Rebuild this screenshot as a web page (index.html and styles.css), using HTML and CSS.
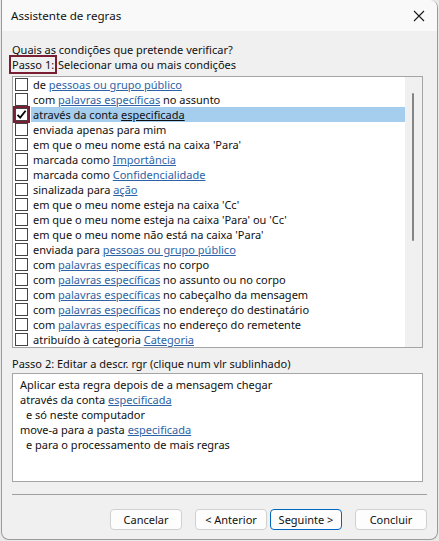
FILE: index.html
```html
<!DOCTYPE html>
<html lang="pt">
<head>
  <meta charset="UTF-8">
  <title>Assistente de regras</title>
  <link rel="stylesheet" href="styles.css">
</head>
<body>
  <div class="window">
    <!-- barra de título -->
    <div class="titlebar">
      <span class="title">Assistente de regras</span>
      <svg class="close" width="12" height="12" viewBox="0 0 12 12">
        <path d="M1 1 L11 11 M11 1 L1 11" stroke="#1a1a1a" stroke-width="1.1" fill="none"/>
      </svg>
    </div>

    <div class="content">
      <p class="line">Quais as condições que pretende verificar?</p>
      <p class="line"><span class="focus">Passo 1:</span> Selecionar uma ou mais condições</p>

      <!-- lista de condições -->
      <div class="listbox">
        <ul class="conds">
          <li><span class="box"></span><span class="label">de <a href="#">pessoas ou grupo público</a></span></li>
          <li><span class="box"></span><span class="label">com <a href="#">palavras específicas</a> no assunto</span></li>
          <li class="selected"><span class="box checked"><svg width="11" height="11" viewBox="0 0 11 11"><path d="M1.5 5.8 L4.2 8.6 L9.6 1.8" stroke="#000" stroke-width="1.8" fill="none"/></svg></span><span class="label">através da conta <a href="#">especificada</a></span></li>
          <li><span class="box"></span><span class="label">enviada apenas para mim</span></li>
          <li><span class="box"></span><span class="label">em que o meu nome está na caixa 'Para'</span></li>
          <li><span class="box"></span><span class="label">marcada como <a href="#">Importância</a></span></li>
          <li><span class="box"></span><span class="label">marcada como <a href="#">Confidencialidade</a></span></li>
          <li><span class="box"></span><span class="label">sinalizada para <a href="#">ação</a></span></li>
          <li><span class="box"></span><span class="label">em que o meu nome esteja na caixa 'Cc'</span></li>
          <li><span class="box"></span><span class="label">em que o meu nome esteja na caixa 'Para' ou 'Cc'</span></li>
          <li><span class="box"></span><span class="label">em que o meu nome não está na caixa 'Para'</span></li>
          <li><span class="box"></span><span class="label">enviada para <a href="#">pessoas ou grupo público</a></span></li>
          <li><span class="box"></span><span class="label">com <a href="#">palavras específicas</a> no corpo</span></li>
          <li><span class="box"></span><span class="label">com <a href="#">palavras específicas</a> no assunto ou no corpo</span></li>
          <li><span class="box"></span><span class="label">com <a href="#">palavras específicas</a> no cabeçalho da mensagem</span></li>
          <li><span class="box"></span><span class="label">com <a href="#">palavras específicas</a> no endereço do destinatário</span></li>
          <li><span class="box"></span><span class="label">com <a href="#">palavras específicas</a> no endereço do remetente</span></li>
          <li><span class="box"></span><span class="label">atribuído à categoria <a href="#">Categoria</a></span></li>
        </ul>
        <div class="scrollbar"><div class="thumb"></div></div>
      </div>

      <p class="line step2">Passo 2: Editar a descr. rgr (clique num vlr sublinhado)</p>

      <!-- descrição da regra -->
      <div class="desc">
        <p>Aplicar esta regra depois de a mensagem chegar</p>
        <p>através da conta <a href="#">especificada</a></p>
        <p class="indent">e só neste computador</p>
        <p>move-a para a pasta <a href="#">especificada</a></p>
        <p class="indent">e para o processamento de mais regras</p>
      </div>

      <div class="sep"></div>

      <div class="buttons">
        <button class="btn">Cancelar</button>
        <div class="pair">
          <button class="btn">&lt; Anterior</button>
          <button class="btn default">Seguinte &gt;</button>
        </div>
        <button class="btn">Concluir</button>
      </div>
    </div>
  </div>
</body>
</html>
```

FILE: styles.css
```css
* {
  margin: 0;
  padding: 0;
  box-sizing: border-box;
}
body {
  background: #e9e9e9;
  font-family: "Noto Sans", "Open Sans", sans-serif;
  font-size: 11px;
  color: #111;
}
a {
  color: #2d63a6;
  text-decoration: underline;
}
.window {
  margin-left: 1px;
  width: 437px;
  height: 540px;
  background: #f0f0f0;
  border: 1px solid #9a9a9a;
  border-top: none;
  border-radius: 0 8px 8px 8px;
  overflow: hidden;
}
.titlebar {
  height: 31px;
  background: #f9f9f9;
  display: flex;
  align-items: center;
  justify-content: space-between;
  padding: 0 12px 0 9px;
}
.title {
  font-size: 11.6px;
}
.content {
  padding: 11px 10px 0 10px;
}
.line {
  line-height: 15px;
}
.focus {
  outline: 2px solid #7a1f33;
  outline-offset: 0;
  padding: 0 1px;
  margin-left: -1px;
}
.listbox {
  margin-top: 4px;
  margin-right: 4px;
  height: 272px;
  border: 1px solid #a5a5a5;
  background: #fff;
  display: flex;
}
.conds {
  list-style: none;
  flex: 1;
}
.conds li {
  height: 15px;
  display: flex;
  align-items: center;
  white-space: nowrap;
}
.box {
  width: 13px;
  height: 13px;
  margin-left: 2px;
  margin-right: 3px;
  border: 1px solid #444;
  background: #fff;
  display: flex;
  align-items: center;
  justify-content: center;
}
.box.checked {
  outline: 2px solid #7a1f33;
}
.label {
  flex: 1;
  height: 15px;
  line-height: 15px;
  padding-left: 2px;
}
.selected .label {
  background: #a4cdee;
}
.selected a {
  color: #111;
}
.scrollbar {
  width: 17px;
  background: #f0f0f0;
  padding-top: 16px;
  padding-left: 7px;
}
.thumb {
  width: 2px;
  height: 148px;
  background: #858585;
  border-radius: 1px;
}
.step2 {
  margin-top: 8px;
}
.desc {
  margin-top: 2px;
  margin-right: 4px;
  height: 109px;
  border: 1px solid #a5a5a5;
  background: #fff;
  padding: 3px 0 0 7px;
}
.desc p {
  line-height: 15px;
}
.desc .indent {
  padding-left: 6px;
}
.sep {
  margin-top: 12px;
  height: 1px;
  background: #a0a0a0;
}
.buttons {
  margin-top: 14px;
  display: flex;
  justify-content: flex-end;
  gap: 13px;
}
.pair {
  display: flex;
  gap: 3px;
}
.btn {
  width: 72px;
  height: 21px;
  font-family: inherit;
  font-size: 11px;
  color: #111;
  background: #fdfdfd;
  border: 1px solid #d0d0d0;
  border-radius: 4px;
}
.btn.default {
  border-color: #0067c0;
}
```
